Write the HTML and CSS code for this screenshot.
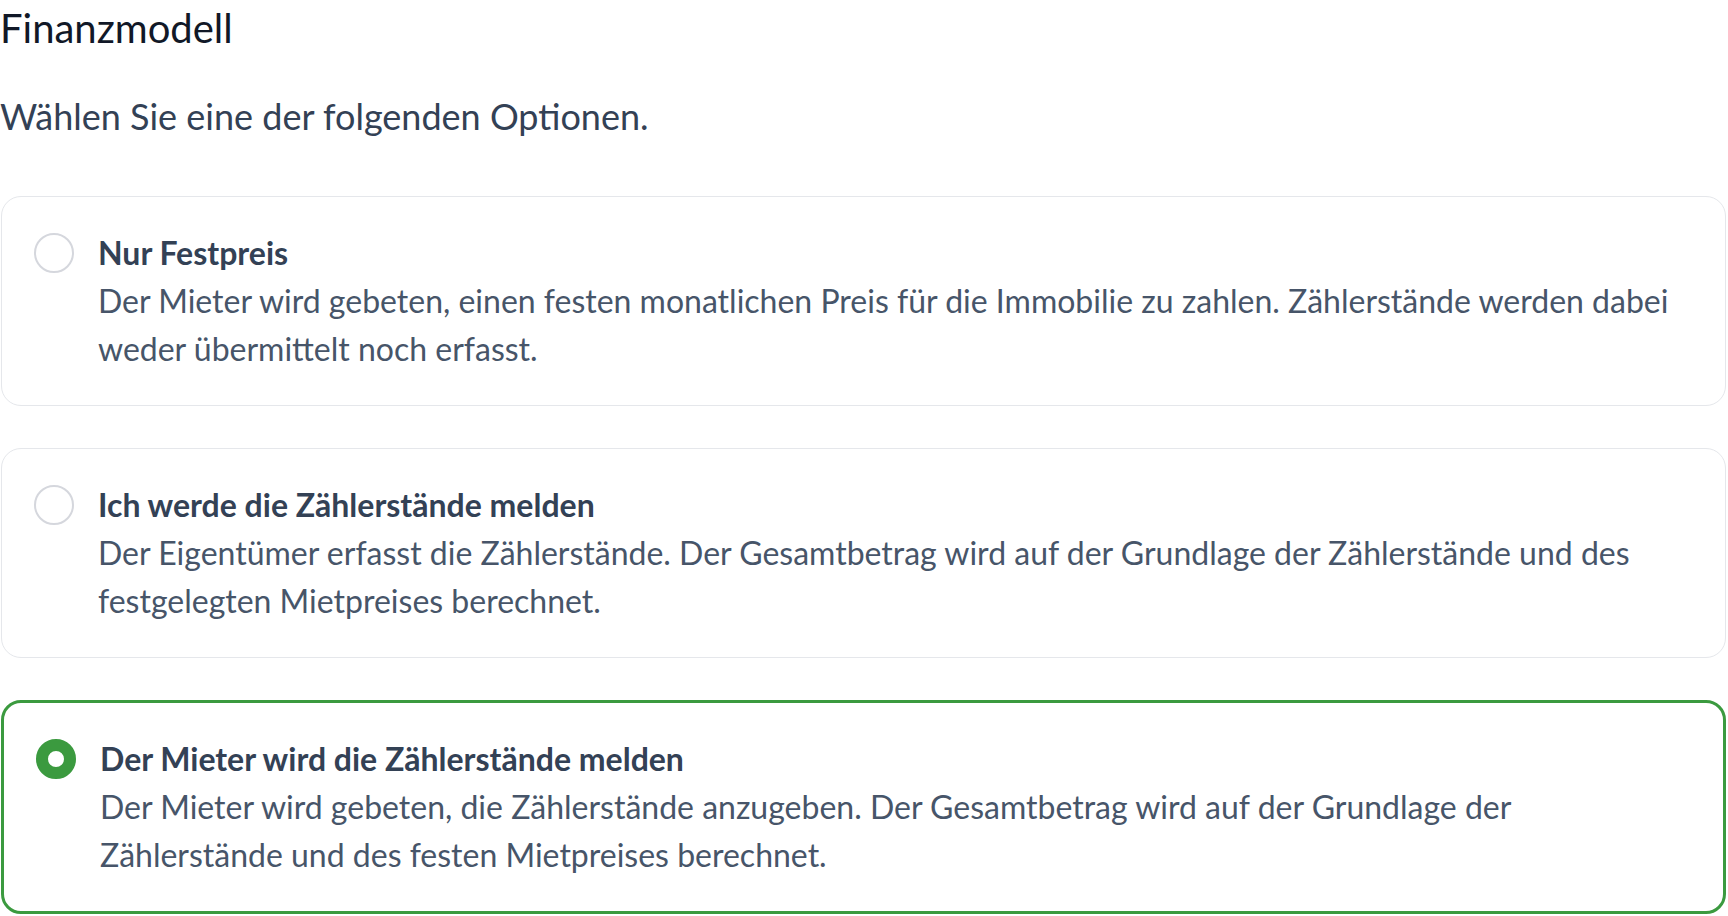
FILE: index.html
```html
<!DOCTYPE html>
<html lang="de">
<head>
<meta charset="utf-8">
<title>Finanzmodell</title>
<link rel="stylesheet" href="styles.css">
</head>
<body>
<main class="page">
  <h1 class="title">Finanzmodell</h1>
  <p class="lead">Wählen Sie eine der folgenden Optionen.</p>
  <div class="options" role="radiogroup">
    <div class="option" role="radio" aria-checked="false">
      <span class="radio"></span>
      <div class="option-text">
        <div class="option-title">Nur Festpreis</div>
        <div class="option-desc">Der Mieter wird gebeten, einen festen monatlichen Preis für die Immobilie zu zahlen. Zählerstände werden dabei weder übermittelt noch erfasst.</div>
      </div>
    </div>
    <div class="option" role="radio" aria-checked="false">
      <span class="radio"></span>
      <div class="option-text">
        <div class="option-title">Ich werde die Zählerstände melden</div>
        <div class="option-desc">Der Eigentümer erfasst die Zählerstände. Der Gesamtbetrag wird auf der Grundlage der Zählerstände und des festgelegten Mietpreises berechnet.</div>
      </div>
    </div>
    <div class="option selected" role="radio" aria-checked="true">
      <span class="radio"></span>
      <div class="option-text">
        <div class="option-title">Der Mieter wird die Zählerstände melden</div>
        <div class="option-desc">Der Mieter wird gebeten, die Zählerstände anzugeben. Der Gesamtbetrag wird auf der Grundlage der Zählerstände und des festen Mietpreises berechnet.</div>
      </div>
    </div>
  </div>
</main>
</body>
</html>
```
FILE: styles.css
```css
* { box-sizing: border-box; }

body {
  margin: 0;
  background: #ffffff;
  font-family: "Lato", "Inter", sans-serif;
  -webkit-font-smoothing: antialiased;
}

.page {
  display: flex;
  flex-direction: column;
}

.title {
  margin: 0;
  font-size: 40px;
  line-height: 56px;
  font-weight: 400;
  color: #111827;
}

.lead {
  margin: 32px 0 0;
  font-size: 36px;
  line-height: 56px;
  color: #334155;
}

.options {
  margin-top: 52px;
  padding: 0 2px 0 1px;
  display: flex;
  flex-direction: column;
  gap: 42px;
}

.option {
  display: flex;
  align-items: flex-start;
  gap: 24px;
  padding: 32px;
  border: 1px solid #e5e7eb;
  border-radius: 20px;
  background: #ffffff;
}

.option.selected {
  border: 3px solid #3b9a3f;
}

.radio {
  flex: none;
  width: 40px;
  height: 40px;
  margin-top: 4px;
  border-radius: 50%;
  border: 2px solid #d5d7dd;
  background: #ffffff;
}

.option.selected .radio {
  border: 12px solid #3b9a3f;
}

.option-text {
  flex: 1;
  min-width: 0;
  font-size: 32px;
  line-height: 48px;
}

.option-title {
  font-weight: 700;
  color: #334155;
}

.option-desc {
  color: #475569;
}
```
